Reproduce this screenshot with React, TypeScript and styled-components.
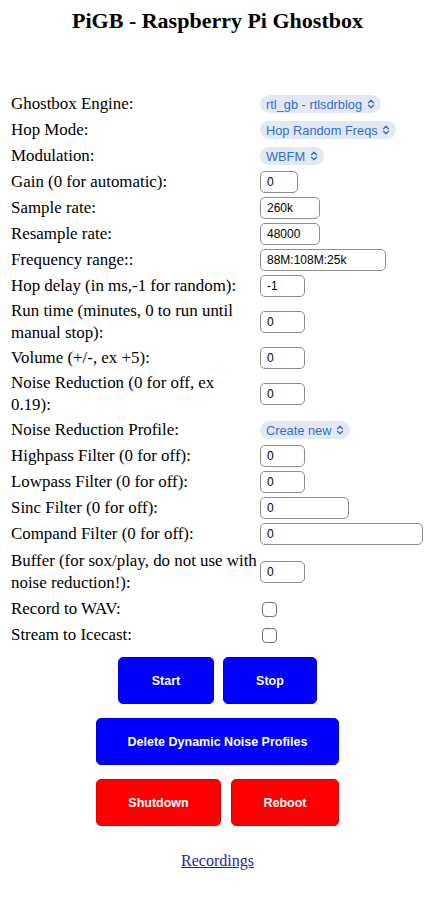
import styled, { createGlobalStyle } from 'styled-components';

const GlobalStyle = createGlobalStyle`
    body {
        margin: 8px;
        background: #ffffff;
        color: #000000;
        font-family: "Liberation Serif", "Times New Roman", serif;
        font-size: 16px;
    }
`;

const Title = styled.h1`
    margin: 0 0 59px;
    text-align: center;
    font-size: 22px;
    line-height: 25px;
    font-weight: bold;
`;

const Form = styled.div`
    display: flex;
    flex-direction: column;
    gap: 2px;
    padding-left: 3px;
`;

const Row = styled.div<{ $tall?: boolean }>`
    display: grid;
    grid-template-columns: 246px auto;
    column-gap: 3px;
    align-items: center;
    min-height: ${(p) => (p.$tall ? 47 : 24)}px;
`;

const Label = styled.label`
    font-size: 16.9px;
    line-height: 22px;
`;

const Control = styled.div`
    display: flex;
    align-items: center;
`;

const SelectWrap = styled.div`
    position: relative;
    display: inline-flex;
`;

const Select = styled.select`
    appearance: none;
    height: 18px;
    padding: 0 18px 0 6px;
    border: none;
    border-radius: 9px;
    background: #e4e9f1;
    color: #2d6fd7;
    font-family: "Liberation Sans", Arial, sans-serif;
    font-size: 12.8px;
    outline: none;
`;

const Chevron = styled.svg`
    position: absolute;
    right: 6px;
    top: 4px;
    width: 8px;
    height: 10px;
    pointer-events: none;
`;

const TextInput = styled.input<{ $w: number }>`
    box-sizing: border-box;
    width: ${(p) => p.$w}px;
    height: 22px;
    padding: 0 6px;
    border: 1px solid #8c8c8c;
    border-radius: 5px;
    background: #ffffff;
    font-family: "Liberation Sans", Arial, sans-serif;
    font-size: 12px;
    color: #000000;
    outline: none;
`;

const Check = styled.input`
    appearance: none;
    box-sizing: border-box;
    width: 15px;
    height: 15px;
    margin: 0 0 0 2px;
    border: 1.5px solid #707070;
    border-radius: 4px;
    background: #ffffff;
`;

const Buttons = styled.div`
    display: flex;
    flex-direction: column;
    align-items: center;
    gap: 14px;
    margin-top: 10px;
`;

const ButtonRow = styled.div<{ $gap: number }>`
    display: flex;
    justify-content: center;
    gap: ${(p) => p.$gap}px;
`;

const Button = styled.button<{ $w: number; $red?: boolean }>`
    width: ${(p) => p.$w}px;
    height: 47px;
    border: 1px solid ${(p) => (p.$red ? '#e00000' : '#0000dd')};
    border-radius: 5px;
    background: ${(p) => (p.$red ? '#ff0000' : '#0000ff')};
    color: #ffffff;
    font-family: "Liberation Sans", Arial, sans-serif;
    font-size: 12.5px;
    font-weight: bold;
`;

const Footer = styled.div`
    margin-top: 26px;
    text-align: center;
    line-height: 18px;
`;

const Link = styled.a`
    color: #1f1fa6;
    text-decoration: underline;
`;

type Field =
    | { label: string; kind: 'select'; value: string }
    | { label: string; kind: 'text'; value: string; w: number; tall?: boolean }
    | { label: string; kind: 'check' };

const fields: Field[] = [
    { label: 'Ghostbox Engine:', kind: 'select', value: 'rtl_gb - rtlsdrblog' },
    { label: 'Hop Mode:', kind: 'select', value: 'Hop Random Freqs' },
    { label: 'Modulation:', kind: 'select', value: 'WBFM' },
    { label: 'Gain (0 for automatic):', kind: 'text', value: '0', w: 38 },
    { label: 'Sample rate:', kind: 'text', value: '260k', w: 60 },
    { label: 'Resample rate:', kind: 'text', value: '48000', w: 60 },
    { label: 'Frequency range::', kind: 'text', value: '88M:108M:25k', w: 126 },
    { label: 'Hop delay (in ms,-1 for random):', kind: 'text', value: '-1', w: 45 },
    { label: 'Run time (minutes, 0 to run until manual stop):', kind: 'text', value: '0', w: 45 },
    { label: 'Volume (+/-, ex +5):', kind: 'text', value: '0', w: 45 },
    { label: 'Noise Reduction (0 for off, ex 0.19):', kind: 'text', value: '0', w: 45 },
    { label: 'Noise Reduction Profile:', kind: 'select', value: 'Create new' },
    { label: 'Highpass Filter (0 for off):', kind: 'text', value: '0', w: 45 },
    { label: 'Lowpass Filter (0 for off):', kind: 'text', value: '0', w: 45 },
    { label: 'Sinc Filter (0 for off):', kind: 'text', value: '0', w: 89 },
    { label: 'Compand Filter (0 for off):', kind: 'text', value: '0', w: 163 },
    { label: 'Buffer (for sox/play, do not use with noise reduction!):', kind: 'text', value: '0', w: 45, tall: true },
    { label: 'Record to WAV:', kind: 'check' },
    { label: 'Stream to Icecast:', kind: 'check' },
];

const renderControl = (f: Field) => {
    if (f.kind === 'select') {
        return (
            <SelectWrap>
                <Select defaultValue={f.value}>
                    <option>{f.value}</option>
                </Select>
                <Chevron viewBox="0 0 8 10" fill="none" stroke="#2d6fd7" strokeWidth="1.3" strokeLinecap="round" strokeLinejoin="round">
                    <path d="M1.5 3.8 L4 1.3 L6.5 3.8" />
                    <path d="M1.5 6.2 L4 8.7 L6.5 6.2" />
                </Chevron>
            </SelectWrap>
        );
    }
    if (f.kind === 'text') {
        return <TextInput type="text" defaultValue={f.value} $w={f.w} />;
    }
    return <Check type="checkbox" />;
};

const App = () => {
    return (
        <>
            <GlobalStyle />
            <Title>PiGB - Raspberry Pi Ghostbox</Title>
            <Form>
                {fields.map((f) => (
                    <Row key={f.label} $tall={f.kind === 'text' && f.tall}>
                        <Label>{f.label}</Label>
                        <Control>{renderControl(f)}</Control>
                    </Row>
                ))}
            </Form>
            <Buttons>
                <ButtonRow $gap={9}>
                    <Button $w={96}>Start</Button>
                    <Button $w={94}>Stop</Button>
                </ButtonRow>
                <Button $w={243}>Delete Dynamic Noise Profiles</Button>
                <ButtonRow $gap={10}>
                    <Button $w={125} $red>
                        Shutdown
                    </Button>
                    <Button $w={108} $red>
                        Reboot
                    </Button>
                </ButtonRow>
            </Buttons>
            <Footer>
                <Link href="#">Recordings</Link>
            </Footer>
        </>
    );
};

export default App;
